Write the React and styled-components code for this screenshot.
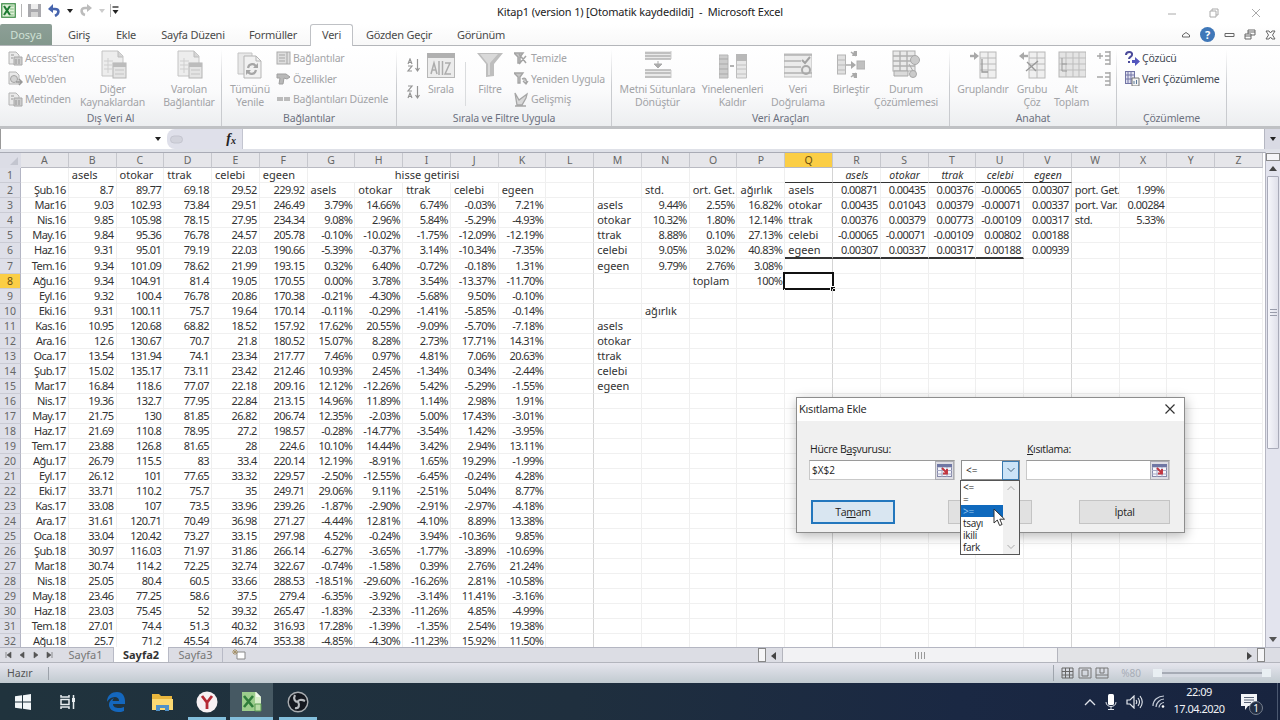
import { Fragment } from "react";
import styled, { createGlobalStyle, css } from "styled-components";

const COLUMNS = "ABCDEFGHIJKLMNOPQRSTUVWXYZ".split("");

// columns A..K, starting at row 2
const PRICES = `
Şub.16|8.7|89.77|69.18|29.52|229.92|asels|otokar|ttrak|celebi|egeen
Mar.16|9.03|102.93|73.84|29.51|246.49|3.79%|14.66%|6.74%|-0.03%|7.21%
Nis.16|9.85|105.98|78.15|27.95|234.34|9.08%|2.96%|5.84%|-5.29%|-4.93%
May.16|9.84|95.36|76.78|24.57|205.78|-0.10%|-10.02%|-1.75%|-12.09%|-12.19%
Haz.16|9.31|95.01|79.19|22.03|190.66|-5.39%|-0.37%|3.14%|-10.34%|-7.35%
Tem.16|9.34|101.09|78.62|21.99|193.15|0.32%|6.40%|-0.72%|-0.18%|1.31%
Ağu.16|9.34|104.91|81.4|19.05|170.55|0.00%|3.78%|3.54%|-13.37%|-11.70%
Eyl.16|9.32|100.4|76.78|20.86|170.38|-0.21%|-4.30%|-5.68%|9.50%|-0.10%
Eki.16|9.31|100.11|75.7|19.64|170.14|-0.11%|-0.29%|-1.41%|-5.85%|-0.14%
Kas.16|10.95|120.68|68.82|18.52|157.92|17.62%|20.55%|-9.09%|-5.70%|-7.18%
Ara.16|12.6|130.67|70.7|21.8|180.52|15.07%|8.28%|2.73%|17.71%|14.31%
Oca.17|13.54|131.94|74.1|23.34|217.77|7.46%|0.97%|4.81%|7.06%|20.63%
Şub.17|15.02|135.17|73.11|23.42|212.46|10.93%|2.45%|-1.34%|0.34%|-2.44%
Mar.17|16.84|118.6|77.07|22.18|209.16|12.12%|-12.26%|5.42%|-5.29%|-1.55%
Nis.17|19.36|132.7|77.95|22.84|213.15|14.96%|11.89%|1.14%|2.98%|1.91%
May.17|21.75|130|81.85|26.82|206.74|12.35%|-2.03%|5.00%|17.43%|-3.01%
Haz.17|21.69|110.8|78.95|27.2|198.57|-0.28%|-14.77%|-3.54%|1.42%|-3.95%
Tem.17|23.88|126.8|81.65|28|224.6|10.10%|14.44%|3.42%|2.94%|13.11%
Ağu.17|26.79|115.5|83|33.4|220.14|12.19%|-8.91%|1.65%|19.29%|-1.99%
Eyl.17|26.12|101|77.65|33.32|229.57|-2.50%|-12.55%|-6.45%|-0.24%|4.28%
Eki.17|33.71|110.2|75.7|35|249.71|29.06%|9.11%|-2.51%|5.04%|8.77%
Kas.17|33.08|107|73.5|33.96|239.26|-1.87%|-2.90%|-2.91%|-2.97%|-4.18%
Ara.17|31.61|120.71|70.49|36.98|271.27|-4.44%|12.81%|-4.10%|8.89%|13.38%
Oca.18|33.04|120.42|73.27|33.15|297.98|4.52%|-0.24%|3.94%|-10.36%|9.85%
Şub.18|30.97|116.03|71.97|31.86|266.14|-6.27%|-3.65%|-1.77%|-3.89%|-10.69%
Mar.18|30.74|114.2|72.25|32.74|322.67|-0.74%|-1.58%|0.39%|2.76%|21.24%
Nis.18|25.05|80.4|60.5|33.66|288.53|-18.51%|-29.60%|-16.26%|2.81%|-10.58%
May.18|23.46|77.25|58.6|37.5|279.4|-6.35%|-3.92%|-3.14%|11.41%|-3.16%
Haz.18|23.03|75.45|52|39.32|265.47|-1.83%|-2.33%|-11.26%|4.85%|-4.99%
Tem.18|27.01|74.4|51.3|40.32|316.93|17.28%|-1.39%|-1.35%|2.54%|19.38%
Ağu.18|25.7|71.2|45.54|46.74|353.38|-4.85%|-4.30%|-11.23%|15.92%|11.50%
`.trim().split("\n").map((line) => line.split("|"));

// columns M..X, keyed by row
const STATS = {
  1: "|||||asels|otokar|ttrak|celebi|egeen||",
  2: "|std.|ort. Get.|ağırlık|asels|0.00871|0.00435|0.00376|-0.00065|0.00307|port. Get.|1.99%",
  3: "asels|9.44%|2.55%|16.82%|otokar|0.00435|0.01043|0.00379|-0.00071|0.00337|port. Var.|0.00284",
  4: "otokar|10.32%|1.80%|12.14%|ttrak|0.00376|0.00379|0.00773|-0.00109|0.00317|std.|5.33%",
  5: "ttrak|8.88%|0.10%|27.13%|celebi|-0.00065|-0.00071|-0.00109|0.00802|0.00188||",
  6: "celebi|9.05%|3.02%|40.83%|egeen|0.00307|0.00337|0.00317|0.00188|0.00939||",
  7: "egeen|9.79%|2.76%|3.08%",
  8: "||toplam|100%",
  10: "|ağırlık",
  11: "asels",
  12: "otokar",
  13: "ttrak",
  14: "celebi",
  15: "egeen",
};

const HEADINGS = ["", "asels", "otokar", "ttrak", "celebi", "egeen"];

function cellValue(row, col) {
  if (col <= 10) {
    if (row === 1) return HEADINGS[col] || "";
    return PRICES[row - 2][col] || "";
  }
  if (col >= 12 && STATS[row]) return STATS[row].split("|")[col - 12] || "";
  return "";
}

/* ---------- icons ---------- */

function ExcelIcon({ size }) {
  return (
    <svg width={size} height={size} viewBox="0 0 20 20">
      <rect x="1" y="1" width="18" height="18" fill="#dff0d8" stroke="#3b8a45" strokeWidth="1.6" />
      <path d="M12 4h5M12 8h5M12 12h5M12 16h5" stroke="#7fb67e" strokeWidth="1.4" />
      <path d="M4 4l8 12M12 4L4 16" stroke="#1e7a33" strokeWidth="2.8" />
    </svg>
  );
}

// the same icon as it looks on the taskbar, paler and with a folded sheet
function ExcelTaskIcon() {
  return (
    <svg width="21" height="20" viewBox="0 0 21 20">
      <path d="M1 0h14l5 5v14H1z" fill="#d7edc9" />
      <path d="M1 0h13v19H1z" fill="#9ccd8c" />
      <path d="M3 4l9 11M12 4L3 15" stroke="#2f7d3a" strokeWidth="2.6" />
      <path d="M14 12h6v7h-6z" fill="#b8dca6" stroke="#5a9c52" />
      <path d="M15 0v5h5" fill="#f1f8ec" />
    </svg>
  );
}

const BIG = {
  sources: (
    <>
      <path d="M3 1h16l5 5v20H3z" fill="#ededed" stroke="#c4c4c4" />
      <path d="M19 1v6h5" fill="#d5d5d5" stroke="#bdbdbd" />
      <path d="M5 11h9M5 15h8M5 19h8M9 8v15" stroke="#cfcfcf" />
      <rect x="14" y="13" width="13" height="15" fill="#e4e4e4" stroke="#b4b4b4" />
      <rect x="14" y="13" width="13" height="4" fill="#bcbcbc" />
      <path d="M16 20h9M16 24h9" stroke="#c4c4c4" />
    </>
  ),
  refresh: (
    <>
      <path d="M2 3h14v21H2z" fill="#e8e8e8" stroke="#c4c4c4" />
      <path d="M8 6h12l5 5v17H8z" fill="#f1f1f1" stroke="#b5b5b5" />
      <path d="M20 6v5h5" fill="none" stroke="#b5b5b5" />
      <path d="M12 18c1-5 7-5 8-1M20 20c-1 5-7 5-8 1" fill="none" stroke="#a6a6a6" strokeWidth="2.2" />
      <path d="M22 13v5h-5zM10 25v-5h5z" fill="#a6a6a6" />
    </>
  ),
  sort: (
    <>
      <rect x="0.5" y="3.5" width="27" height="24" fill="#ececec" stroke="#b7b7b7" />
      <rect x="0" y="3" width="28" height="5" fill="#b0b0b0" />
      <path d="M4 24l3-11 3 11M5 20h4M18 13h5l-5 11h6M12 11v14M15.500 11v14" fill="none" stroke="#acacac" strokeWidth="1.5" />
    </>
  ),
  filter: (
    <>
      <path d="M1 3h26l-9 11v12l-8 1V14z" fill="#bebebe" />
      <path d="M4 4h18l-8 9v12h-2V14z" fill="#d9d9d9" />
    </>
  ),
  columns: (
    <>
      <path d="M1 1h26v8H1zM1 20h26v8H1z" fill="#e9e9e9" />
      <path d="M1 3h26M1 6h26M1 9h26M1 20h26M1 23h26M1 27h26" stroke="#b2b2b2" strokeWidth="1.3" />
      <path d="M14 11v3M14 18l-4-4h8z" stroke="#ababab" fill="#ababab" />
      <path d="M27 1v8M27 20v8" stroke="#cbcbcb" />
    </>
  ),
  duplicates: (
    <>
      <path d="M0 5h9v23H0z" fill="#cccccc" stroke="#b5b5b5" />
      <path d="M0 9h9M0 14h9M0 19h9M0 24h9" stroke="#a9a9a9" />
      <path d="M11 16h4" stroke="#aaa" strokeWidth="1.8" />
      <path d="M17.500 5h10v23h-10z" fill="#e7e7e7" stroke="#bdbdbd" />
      <path d="M17 4h11v7H17z" fill="#b8b8b8" />
      <path d="M17 15h11M17 19h11M17 24h11" stroke="#c0c0c0" />
    </>
  ),
  validate: (
    <>
      <rect x="0" y="4" width="28" height="23" fill="#ebebeb" stroke="#bcbcbc" />
      <path d="M0 5h28M0 11h17M0 17h17M0 23h28" stroke="#b2b2b2" strokeWidth="1.5" />
      <path d="M18 10l3 3 5-6" fill="none" stroke="#a2a2a2" strokeWidth="2" />
      <circle cx="22" cy="20" r="4" fill="none" stroke="#a9a9a9" strokeWidth="2" />
    </>
  ),
  merge: (
    <>
      <rect x="0.5" y="5" width="8" height="19" fill="#e0e0e0" stroke="#b4b4b4" />
      <path d="M0 10h9M0 15h9M0 20h9" stroke="#b8b8b8" />
      <path d="M9 15h6M14 2l5 4M14 27l5-4" stroke="#ababab" fill="none" strokeWidth="1.6" />
      <path d="M14 11l5 4-5 4zM17 1h3v5h-5zM17 28h3v-5h-5z" fill="#a9a9a9" />
      <rect x="20" y="11" width="8" height="8" fill="#c0c0c0" stroke="#b0b0b0" />
    </>
  ),
  whatif: (
    <>
      <rect x="1" y="1" width="22" height="20" fill="#e9e9e9" stroke="#adadad" />
      <path d="M1 6h22M1 11h22M1 16h22M8 1v20M15 1v20" stroke="#b0b0b0" strokeWidth="1.4" />
      <circle cx="23" cy="10" r="4.500" fill="#cbcbcb" stroke="#a8a8a8" />
      <circle cx="21" cy="24" r="3.500" fill="#cbcbcb" stroke="#a8a8a8" />
      <path d="M2 21h14v5H2zM17 14l4 7" stroke="#a9a9a9" fill="#dadada" />
    </>
  ),
  group: (
    <>
      <rect x="11" y="2" width="16" height="26" fill="#efefef" stroke="#b8b8b8" />
      <path d="M11 8h16M11 14h16M11 20h16M19 2v26" stroke="#b8b8b8" />
      <path d="M1 6h7" stroke="#a9a9a9" strokeWidth="2.4" />
      <path d="M5 2l5 4-5 4z" fill="#a9a9a9" />
      <path d="M13 9v13h6" fill="none" stroke="#999" strokeWidth="1.3" />
    </>
  ),
  ungroup: (
    <>
      <rect x="11" y="2" width="16" height="26" fill="#efefef" stroke="#b8b8b8" />
      <path d="M11 8h16M11 14h16M11 20h16M19 2v26" stroke="#b8b8b8" />
      <path d="M3 6h7" stroke="#a9a9a9" strokeWidth="2.4" />
      <path d="M6 2L1 6l5 4z" fill="#a9a9a9" />
      <path d="M8 21l12-10M9 12l9 9" fill="none" stroke="#999" strokeWidth="1.4" />
    </>
  ),
  subtotal: (
    <>
      <rect x="1" y="2" width="27" height="25" fill="#e4e4e4" stroke="#b5b5b5" />
      <path d="M1 8h27M1 14h27M1 20h27M8 2v25M15 2v25M21 2v25" stroke="#bdbdbd" />
      <path d="M4 8v13h5M4 14h5" fill="none" stroke="#999" />
    </>
  ),
};

function BigIcon({ kind }) {
  return (
    <svg width="28" height="30" viewBox="0 0 28 30">
      {BIG[kind]}
    </svg>
  );
}

function SmallIcon({ kind }) {
  return (
    <svg width="15" height="15" viewBox="0 0 15 15">
      {kind === "doc" && (
        <>
          <path d="M1 1h7l3 3v9H1z" fill="#e9e9e9" stroke="#b4b4b4" />
          <path d="M6 6h8v8H6z" fill="#cdcdcd" stroke="#a8a8a8" />
          <path d="M8 8v5M11 8v5M3 4h3M3 7h2" stroke="#979797" />
        </>
      )}
      {kind === "web" && (
        <>
          <path d="M1 1h7l3 3v9H1z" fill="#e9e9e9" stroke="#b4b4b4" />
          <circle cx="6" cy="8" r="3.500" fill="#d2d2d2" stroke="#a3a3a3" />
          <path d="M8 11h6M11 8l3 3-3 3" fill="none" stroke="#989898" strokeWidth="1.500" />
        </>
      )}
      {kind === "list" && (
        <>
          <rect x="1" y="1" width="13" height="12" fill="#dedede" stroke="#ababab" />
          <path d="M3 4h6M3 7h6M3 10h6M11 1v12" stroke="#a5a5a5" />
        </>
      )}
      {kind === "hand" && <path d="M1 3h9l4 3-3 2-3-1-1 6H3l1-6H1z" fill="#b9b9b9" stroke="#9f9f9f" />}
      {kind === "chain" && <path d="M1 7h13" stroke="#bbb" strokeWidth="4" strokeDasharray="6 1" />}
      {kind === "clear" && (
        <path d="M0 2h9L6 6v6H4V6zM5 3l7 9M12 5l-7 8" fill="#c5c5c5" stroke="#a4a4a4" strokeWidth="1.5" />
      )}
      {kind === "apply" && (
        <path d="M0 2h9L6 6v6H4V6zM8 8c3-2 5 0 4 4M9 10l3 3 2-3" fill="#c5c5c5" stroke="#a4a4a4" strokeWidth="1.3" />
      )}
      {kind === "advanced" && (
        <path d="M1 1l4 7 8-6-1 4-4 7H3zM1 14h11" fill="#d8d8d8" stroke="#a6a6a6" strokeWidth="1.3" />
      )}
      {kind === "az" && (
        <path d="M2 6l2-5 2 5M2.500 4.500h3M2 8h4l-4 5h4M11.500 1v11M9.500 10l2 3 2-3" fill="none" stroke="#949494" strokeWidth="1.2" />
      )}
      {kind === "za" && (
        <path d="M2 1h4L2 6h4M2 13l2-5 2 5M2.500 11.500h3M11.500 1v11M9.500 10l2 3 2-3" fill="none" stroke="#949494" strokeWidth="1.2" />
      )}
      {kind === "show" && (
        <path d="M0 5h6M3 2v6M8 1h5M8 5h5M8 9h5M8 13h5M13 0v14" fill="none" stroke="#a6a6a6" strokeWidth="1.3" />
      )}
      {kind === "hide" && (
        <path d="M0 5h6M8 1h5M8 5h5M8 9h5M8 13h5M13 0v14" fill="none" stroke="#a6a6a6" strokeWidth="1.3" />
      )}
      {kind === "solver" && (
        <>
          <path d="M1 4c0-4 7-4 6 0-.5 2-3 2-3 4M4 10v2" fill="none" stroke="#4a4a9a" strokeWidth="2" />
          <path d="M7 9h3V6l5 4.500-5 4.500v-3H7z" fill="#5356bd" />
        </>
      )}
      {kind === "analysis" && (
        <>
          <rect x="0.500" y="0.500" width="9" height="12" fill="#dfe0ef" stroke="#7275a5" />
          <path d="M0 4h10M0 8h10M3 0v13M6 0v13" stroke="#7275a5" />
          <path d="M7 7h7v8H7z" fill="#f4f4f4" stroke="#777" />
          <path d="M9 13v-3M11.500 13V9" stroke="#5d7b9a" />
        </>
      )}
    </svg>
  );
}

function PickIcon() {
  return (
    <svg width="15" height="13" viewBox="0 0 15 13">
      <rect x="0.500" y="0.500" width="14" height="12" fill="#f6f6fb" stroke="#8689aa" />
      <path d="M0 3h15M0 6.500h15M0 10h15M5 0v13M10 0v13" stroke="#a6a9c4" />
      <path d="M0 0h15v3H0z" fill="#6f77a4" />
      <path d="M5 4l5 5M10 5v4.500H6" stroke="#c2353f" strokeWidth="1.900" fill="none" />
    </svg>
  );
}

/* ---------- ribbon ---------- */

function Big({ kind, width, lines }) {
  return (
    <BigButton $width={width}>
      <BigIcon kind={kind} />
      <BigLabel>
        {lines.map((line) => (
          <span key={line}>{line}</span>
        ))}
      </BigLabel>
    </BigButton>
  );
}

function SmallList({ items, width, active }) {
  return (
    <SmallColumn $width={width} $active={active}>
      {items.map(([kind, text]) => (
        <SmallButton key={text}>
          <SmallIcon kind={kind} />
          {text}
        </SmallButton>
      ))}
    </SmallColumn>
  );
}

function Ribbon() {
  return (
    <RibbonBar>
      <Group $width={222}>
        <GroupBody>
          <SmallList width={69} items={[["doc", "Access'ten"], ["web", "Web'den"], ["doc", "Metinden"]]} />
          <Big kind="sources" width={77} lines={["Diğer", "Kaynaklardan"]} />
          <InnerLine />
          <Big kind="sources" width={64} lines={["Varolan", "Bağlantılar"]} />
        </GroupBody>
        <GroupName>Dış Veri Al</GroupName>
      </Group>
      <Group $width={175}>
        <GroupBody>
          <Big kind="refresh" width={46} lines={["Tümünü", "Yenile"]} />
          <SmallList width={120} items={[["list", "Bağlantılar"], ["hand", "Özellikler"], ["chain", "Bağlantıları Düzenle"]]} />
        </GroupBody>
        <GroupName>Bağlantılar</GroupName>
      </Group>
      <Group $width={215}>
        <GroupBody>
          <SortColumn>
            <SmallIcon kind="az" />
            <SmallIcon kind="za" />
          </SortColumn>
          <Big kind="sort" width={42} lines={["Sırala"]} />
          <InnerLine />
          <Big kind="filter" width={42} lines={["Filtre"]} />
          <SmallList width={95} items={[["clear", "Temizle"], ["apply", "Yeniden Uygula"], ["advanced", "Gelişmiş"]]} />
        </GroupBody>
        <GroupName>Sırala ve Filtre Uygula</GroupName>
      </Group>
      <Group $width={338}>
        <GroupBody>
          <Big kind="columns" width={81} lines={["Metni Sütunlara", "Dönüştür"]} />
          <Big kind="duplicates" width={69} lines={["Yinelenenleri", "Kaldır"]} />
          <Big kind="validate" width={62} lines={["Veri", "Doğrulama"]} />
          <Big kind="merge" width={44} lines={["Birleştir"]} />
          <Big kind="whatif" width={66} lines={["Durum", "Çözümlemesi"]} />
        </GroupBody>
        <GroupName>Veri Araçları</GroupName>
      </Group>
      <Group $width={167}>
        <GroupBody>
          <Big kind="group" width={56} lines={["Gruplandır"]} />
          <Big kind="ungroup" width={42} lines={["Grubu", "Çöz"]} />
          <Big kind="subtotal" width={37} lines={["Alt", "Toplam"]} />
          <DetailColumn>
            <SmallIcon kind="show" />
            <SmallIcon kind="hide" />
          </DetailColumn>
        </GroupBody>
        <GroupName>Anahat</GroupName>
      </Group>
      <Group $width={110}>
        <GroupBody>
          <SmallList active width={104} items={[["solver", "Çözücü"], ["analysis", "Veri Çözümleme"]]} />
        </GroupBody>
        <GroupName>Çözümleme</GroupName>
      </Group>
    </RibbonBar>
  );
}

/* ---------- sheet ---------- */

function Sheet() {
  const rows = Array.from({ length: 32 }, (_, i) => i + 1);
  return (
    <Grid>
      <Corner>
        <svg width="8" height="8" viewBox="0 0 8 8"><path d="M8 0v8H0z" fill="#c3c5cf" /></svg>
      </Corner>
      {COLUMNS.map((name) => (
        <Head key={name} $on={name === "Q"}>{name}</Head>
      ))}
      {rows.map((row) => (
        <Fragment key={row}>
          <RowHead $on={row === 8}>{row}</RowHead>
          {COLUMNS.map((name, col) => {
            if (row === 1 && col > 6 && col < 11) return null;
            if (row === 1 && col === 6) return <Cell key={name} $span={5} $align="center">hisse getirisi</Cell>;
            const value = cellValue(row, col);
            const number = /^-?\d/.test(value);
            const matrixHead = row === 1 && col > 16;
            const selected = row === 8 && name === "Q";
            return (
              <Cell
                key={name}
                $spacing={number || col === 0 ? -0.55 : name === "W" ? -0.35 : 0}
                $align={matrixHead ? "center" : number || col === 0 ? "right" : "left"}
                $italic={matrixHead}
                $selected={selected}
                $page={col === 11 || col === 16 || col === 21}
                $thin={row === 1 && col >= 16 && col <= 21}
                $thick={row === 6 && col >= 16 && col <= 20}
              >
                {value}
                {selected && <Selection />}
              </Cell>
            );
          })}
        </Fragment>
      ))}
    </Grid>
  );
}

/* ---------- dialog ---------- */

function ConstraintDialog() {
  const options = ["<=", "=", ">=", "tsayı", "ikili", "fark"];
  return (
    <Dialog>
      <DialogTitle>
        Kısıtlama Ekle
        <svg width="10" height="10" viewBox="0 0 10 10">
          <path d="M0.500 0.500l9 9M9.500 0.500l-9 9" stroke="#333" strokeWidth="1.200" />
        </svg>
      </DialogTitle>
      <DialogBody>
        <Fields>
          <FieldLabel>Hücre B<u>a</u>şvurusu:</FieldLabel>
          <span />
          <FieldLabel><u>K</u>ısıtlama:</FieldLabel>
          <RefInput>
            <span>$X$2</span>
            <PickButton><PickIcon /></PickButton>
          </RefInput>
          <Combo>
            <span>&lt;=</span>
            <ComboArrow>
              <svg width="8" height="6" viewBox="0 0 8 6"><path d="M0.500 1L4 4.500 7.500 1" fill="none" stroke="#47647d" /></svg>
            </ComboArrow>
            <Menu>
              <MenuItems>
                {options.map((option, i) => (
                  <MenuItem key={option} $on={i === 2}>{option}</MenuItem>
                ))}
              </MenuItems>
              <MenuScroll>
                <svg width="8" height="6" viewBox="0 0 8 6"><path d="M0.500 5L4 1.500 7.500 5" fill="none" stroke="#aaa" /></svg>
                <svg width="8" height="6" viewBox="0 0 8 6"><path d="M0.500 1L4 4.500 7.500 1" fill="none" stroke="#aaa" /></svg>
              </MenuScroll>
            </Menu>
            <Pointer width="13" height="19" viewBox="0 0 13 19">
              <path d="M1 1v14l3.300-3 2.300 5.500 2.500-1-2.300-5.300H11.500z" fill="#fff" stroke="#333" />
            </Pointer>
          </Combo>
          <RefInput>
            <span />
            <PickButton><PickIcon /></PickButton>
          </RefInput>
        </Fields>
        <Buttons>
          <DialogButton $width={84} $primary>Ta<u>m</u>am</DialogButton>
          <DialogButton $width={84} />
          <DialogButton $width={91}>İptal</DialogButton>
        </Buttons>
      </DialogBody>
    </Dialog>
  );
}

/* ---------- app ---------- */

function App() {
  return (
    <Screen>
      <GlobalStyle />
      <TitleBar>
        <QuickAccess>
          <ExcelIcon size={15} />
          <Bar />
          <svg width="13" height="13" viewBox="0 0 13 13">
            <path d="M0 0h13v13H0z" fill="#a9a9ad" />
            <path d="M3 0h7v5H3z" fill="#eee" />
            <path d="M3 8h7v5H3z" fill="#d4d4d4" />
          </svg>
          <svg width="12" height="13" viewBox="0 0 12 13">
            <path d="M2 5h5c5 0 4 5 0 7" fill="none" stroke="#4664ad" strokeWidth="2.600" />
            <path d="M5 0v9L0 5z" fill="#4664ad" />
          </svg>
          <Caret />
          <svg width="12" height="13" viewBox="0 0 12 13">
            <path d="M10 4H5C0 4 1 10 5 11" fill="none" stroke="#bcbcbc" strokeWidth="2.600" />
            <path d="M7 0v8l5-4z" fill="#bcbcbc" />
          </svg>
          <Caret $faint />
          <Bar />
          <Customize width="7" height="9" viewBox="0 0 7 9">
            <path d="M0.500 1h6" stroke="#333" strokeWidth="1.400" />
            <path d="M0.500 4h6L3.500 8z" fill="#222" />
          </Customize>
        </QuickAccess>
        <AppTitle>Kitap1 (version 1) [Otomatik kaydedildi]&nbsp; -&nbsp; Microsoft Excel</AppTitle>
        <WindowButtons>
          <svg width="10" height="10" viewBox="0 0 10 10"><path d="M1 6h8" stroke="#aaa" /></svg>
          <svg width="10" height="10" viewBox="0 0 10 10"><path d="M1 3h6v6H1zM3 3V1h6v6H7" fill="none" stroke="#aaa" /></svg>
          <svg width="10" height="10" viewBox="0 0 10 10"><path d="M1 1l8 8M9 1L1 9" stroke="#aaa" /></svg>
        </WindowButtons>
      </TitleBar>
      <Tabs>
        <FileTab>Dosya</FileTab>
        <Tab $width={54}>Giriş</Tab>
        <Tab $width={40}>Ekle</Tab>
        <Tab $width={94}>Sayfa Düzeni</Tab>
        <Tab $width={66}>Formüller</Tab>
        <Gap />
        <Tab $width={43} $active>Veri</Tab>
        <Tab $width={92}>Gözden Geçir</Tab>
        <Tab $width={72}>Görünüm</Tab>
        <TabTools>
          <svg width="10" height="8" viewBox="0 0 10 8"><path d="M1.500 6V4L5 1.500 8.500 4v2z" fill="none" stroke="#666" /></svg>
          <Help>?</Help>
          <svg width="11" height="8" viewBox="0 0 11 8"><path d="M1 2.500h9v3H1z" fill="none" stroke="#666" /></svg>
          <svg width="12" height="11" viewBox="0 0 12 11"><path d="M1 5h6v5H1zM4 5V1h7v5H7M1 7h6M4 3h7" fill="none" stroke="#666" /></svg>
          <svg width="11" height="10" viewBox="0 0 11 10"><path d="M1 1h3l1.500 2L7 1h3L7.500 5 10 9H7L5.500 7 4 9H1l2.500-4z" fill="none" stroke="#666" /></svg>
        </TabTools>
      </Tabs>
      <Ribbon />
      <FormulaBar>
        <NameBox><Caret /></NameBox>
        <FxBox>
          <svg width="13" height="9" viewBox="0 0 13 9">
            <path d="M4 1h5a3.500 3.500 0 0 1 0 7H4a3.500 3.500 0 0 1 0-7z" fill="#d2d3dc" stroke="#c4c5cf" />
          </svg>
          <div>f<sub>x</sub></div>
        </FxBox>
        <FormulaInput />
        <Expand><Caret /></Expand>
      </FormulaBar>
      <Workspace>
        <Sheet />
        <VScroll>
          <SplitBox />
          <Arrow $dir="up" />
          <VThumb><i /><i /><i /></VThumb>
          <VTrack />
          <Arrow $dir="down" />
        </VScroll>
      </Workspace>
      <SheetStrip>
        <SheetNav>
          <svg width="48" height="8" viewBox="0 0 48 8">
            <path d="M1 1v6M6 1v6L2 4zM19 1v6l-4-3zM29 1v6l4-3zM42 1v6l4-3zM47 1v6" fill="#555" stroke="#555" strokeWidth="0.600" />
          </svg>
        </SheetNav>
        <SheetTab $width={56}>Sayfa1</SheetTab>
        <SheetTab $width={55} $active>Sayfa2</SheetTab>
        <SheetTab $width={54}>Sayfa3</SheetTab>
        <NewSheet>
          <svg width="14" height="11" viewBox="0 0 14 11">
            <path d="M5 3h8v7H5z" fill="#fff" stroke="#888" />
            <path d="M3 0v6M0 3h6M1 1l4 4M5 1L1 5" stroke="#a5926a" />
          </svg>
        </NewSheet>
        <HSplit />
        <Arrow $dir="left" />
        <HThumb><i /><i /><i /><i /></HThumb>
        <HTrack />
        <Arrow $dir="right" />
        <HSplit $end />
      </SheetStrip>
      <StatusBar>
        <Ready>Hazır</Ready>
        <StatusTools>
          <svg width="48" height="12" viewBox="0 0 48 12">
            <path d="M1 1h11v10H1zM1 4.500h11M1 8h11M4.500 1v10M8.500 1v10" fill="none" stroke="#666" />
            <path d="M18 1h12v10H18zM21 3h6v6h-6z" fill="none" stroke="#777" />
            <path d="M35 1h12v10H35zM39 1v5h4V1M35 8h12" fill="none" stroke="#777" />
          </svg>
          <Zoom>%80</Zoom>
          <Slider />
        </StatusTools>
      </StatusBar>
      <Taskbar>
        <TaskItem $width={45}>
          <svg width="16" height="16" viewBox="0 0 16 16">
            <path d="M0 2.300l7-1v6.200H0zM8 1.200L16 0v7.500H8zM0 8.500h7v6.200l-7-1zM8 8.500h8V16l-8-1.200z" fill="#f2f6f8" />
          </svg>
        </TaskItem>
        <TaskItem $width={46}>
          <svg width="17" height="16" viewBox="0 0 17 16">
            <path d="M1 1v2h8V1M1 5.500h8v5H1zM1 15v-2h8v2M13.500 1v14" fill="none" stroke="#e8edf0" strokeWidth="1.500" />
            <path d="M12 4h3v4h-3z" fill="#e8edf0" />
          </svg>
        </TaskItem>
        <TaskItem $width={50}>
          <svg width="20" height="20" viewBox="0 0 20 20">
            <path d="M1 10C1 3 6 0 11 0c6 0 8 5 8 9v3H7c0 3 3 4 6 4 2 0 4-.5 5-1v4c-2 1-4 1-6 1-6 0-9-4-9-7 0-4 3-6 5-7-1 1-1.500 2-1.500 3H13c0-3-2-4-4-4-4 0-7 3-8 5z" fill="#1467bd" />
          </svg>
        </TaskItem>
        <TaskItem $width={43}>
          <svg width="21" height="18" viewBox="0 0 21 18">
            <path d="M0 1h7l2 2h11v14H0z" fill="#e9b63d" />
            <path d="M0 6h21v11H0z" fill="#fbd973" />
            <path d="M4 18v-6h13v6h-4v-3H8v3z" fill="#4f91c9" />
          </svg>
        </TaskItem>
        <TaskItem $width={46} $open>
          <svg width="22" height="22" viewBox="0 0 22 22">
            <circle cx="11" cy="11" r="10.500" fill="#f7f1f3" />
            <path d="M6 5l5 6.500L16 5M11 11v7" fill="none" stroke="#b52b35" strokeWidth="2.800" />
          </svg>
        </TaskItem>
        <TaskItem $width={43} $open $focus><ExcelTaskIcon /></TaskItem>
        <TaskItem $width={49} $open>
          <svg width="22" height="22" viewBox="0 0 22 22">
            <circle cx="11" cy="11" r="9.800" fill="#14181f" stroke="#a9adb1" strokeWidth="1.400" />
            <path d="M8 4c-2 4 0 7 3 7M18 10c-4-2-7-1-7 1M8 17c4 1 5-3 3-6" fill="none" stroke="#b7bbbf" strokeWidth="2.200" />
          </svg>
        </TaskItem>
        <Tray>
          <svg width="12" height="8" viewBox="0 0 12 8"><path d="M1 7l5-5 5 5" fill="none" stroke="#dfe3ea" strokeWidth="1.300" /></svg>
          <svg width="12" height="16" viewBox="0 0 12 16">
            <rect x="3" y="0" width="6" height="11" rx="1.500" fill="#fff" />
            <path d="M1 8c0 6 10 6 10 0M6 12v4M3 15.500h6" fill="none" stroke="#dfe3ea" />
          </svg>
          <svg width="17" height="14" viewBox="0 0 17 14">
            <path d="M1 5h3l4-4v12L4 9H1z" fill="none" stroke="#e4e8ee" strokeWidth="1.200" />
            <path d="M10 5q1.500 2 0 4M12 3q3 4 0 8M14 1q4.500 6 0 12" fill="none" stroke="#e4e8ee" strokeWidth="1.100" />
          </svg>
          <svg width="13" height="13" viewBox="0 0 13 13">
            <path d="M1 11C1 5 6 1 12 1M4 12c0-4 4-8 8-8M7 12.500c0-3 3-5 5-5" fill="none" stroke="#c5ccd8" strokeWidth="1.200" />
            <circle cx="11" cy="11.500" r="1.300" fill="#fff" />
          </svg>
        </Tray>
        <Clock>
          <span>22:09</span>
          <span>17.04.2020</span>
        </Clock>
        <Notice>
          <svg width="17" height="17" viewBox="0 0 17 17">
            <path d="M0 0h16v12H7l-3 4v-4H0z" fill="#f3f5f8" />
            <path d="M3 3.500h10M3 6h10M3 8.500h7" stroke="#5a6478" />
          </svg>
          <Badge>1</Badge>
        </Notice>
      </Taskbar>
      <ConstraintDialog />
    </Screen>
  );
}

export default App;

const GlobalStyle = createGlobalStyle`
  * { box-sizing: border-box; }
  body { margin: 0; overflow: hidden; }
  svg { display: block; flex: none; }
`;

const Screen = styled.div`
  position: relative;
  width: 1280px;
  height: 720px;
  display: flex;
  flex-direction: column;
  background: #fff;
  color: #333;
  font-family: "Noto Sans", "Open Sans", sans-serif;
  font-size: 11px;
  overflow: hidden;
`;

const TitleBar = styled.div`
  height: 24px;
  flex: none;
  display: grid;
  grid-template-columns: 490px 300px 1fr;
  align-items: start;
`;

const QuickAccess = styled.div`
  height: 21px;
  display: flex;
  align-items: center;
  gap: 7px;
  padding-left: 1px;
`;

const Bar = styled.span`
  width: 1px;
  height: 13px;
  margin: 0 -1px 0 -2px;
  background: #b5b5b5;
`;

const Caret = styled.span`
  border: 3px solid transparent;
  border-top: 4px solid ${props => (props.$faint ? "#ccc" : "#222")};
  border-bottom: 0;
`;

const Customize = styled.svg`
  margin-left: -5px;
`;

const AppTitle = styled.div`
  padding-top: 4px;
  line-height: 16px;
  text-align: center;
  color: #222;
  white-space: nowrap;
  letter-spacing: -0.17px;
`;

const WindowButtons = styled.div`
  display: flex;
  justify-content: flex-end;
  gap: 32px;
  padding: 8px 19px 0 0;
`;

const Tabs = styled.div`
  height: 22px;
  flex: none;
  display: flex;
  background: linear-gradient(#fff, #f8f8f8);
  border-bottom: 1px solid #b4b6ba;
`;

const FileTab = styled.div`
  width: 52px;
  height: 21px;
  line-height: 21px;
  text-align: center;
  background: linear-gradient(#8d9f96, #83988d);
  border-radius: 2px 2px 0 0;
  color: #cfe0d5;
`;

const Gap = styled.div`
  width: 4px;
`;

const Tab = styled.div`
  width: ${props => props.$width}px;
  height: 22px;
  line-height: 21px;
  text-align: center;
  white-space: nowrap;
  letter-spacing: -0.25px;
  color: #4a4a4a;
  ${props => props.$active && css`
    line-height: 19px;
    background: #fff;
    border: 1px solid #bfc1c5;
    border-bottom: 0;
    border-radius: 3px 3px 0 0;
  `}
`;

const TabTools = styled.div`
  margin-left: auto;
  display: flex;
  align-items: center;
  gap: 9px;
  padding-right: 4px;
`;

const Help = styled.div`
  width: 15px;
  height: 15px;
  border-radius: 50%;
  background: #3f77b8;
  color: #fff;
  font-weight: 700;
  line-height: 15px;
  text-align: center;
`;

const RibbonBar = styled.div`
  height: 80px;
  flex: none;
  display: flex;
  background: linear-gradient(#fff 0%, #fbfbfc 55%, #eceef0 100%);
`;

const Group = styled.div`
  width: ${props => props.$width}px;
  display: flex;
  flex-direction: column;
  border-right: 1px solid;
  border-image: linear-gradient(#fff 5%, #c9cbcf 50%, #c9cbcf) 1;
`;

const GroupBody = styled.div`
  height: 64px;
  display: flex;
  padding-left: 5px;
`;

const GroupName = styled.div`
  line-height: 16px;
  text-align: center;
  font-size: 10.5px;
  letter-spacing: -0.15px;
  color: #6d7180;
`;

const InnerLine = styled.div`
  width: 1px;
  margin: 16px 3px 4px;
  background: #dadcde;
`;

const BigButton = styled.div`
  width: ${props => props.$width}px;
  flex: none;
  display: flex;
  flex-direction: column;
  align-items: center;
  padding-top: 4px;
`;

const BigLabel = styled.div`
  display: flex;
  flex-direction: column;
  align-items: center;
  padding-top: 3px;
  white-space: nowrap;
  font-size: 10.5px;
  line-height: 12.5px;
  letter-spacing: -0.2px;
  color: #a3a4a7;
`;

const SmallColumn = styled.div`
  width: ${props => props.$width}px;
  flex: none;
  padding: 2px 0 0 3px;
  color: ${props => (props.$active ? "#444a55" : "#a3a4a7")};
`;

const SmallButton = styled.div`
  height: 20.5px;
  display: flex;
  align-items: center;
  gap: 2px;
  white-space: nowrap;
  font-size: 10.5px;
  letter-spacing: -0.2px;
`;

const SortColumn = styled.div`
  width: 18px;
  display: flex;
  flex-direction: column;
  gap: 12px;
  padding: 12px 0 0 4px;
`;

const DetailColumn = styled.div`
  display: flex;
  flex-direction: column;
  gap: 6px;
  padding: 5px 0 0 7px;
`;

const FormulaBar = styled.div`
  height: 26px;
  flex: none;
  display: flex;
  border-top: 3px solid #bfc1c4;
  border-bottom: 3px solid #dfe1e8;
  background: #fff;
`;

const NameBox = styled.div`
  width: 167px;
  display: flex;
  align-items: center;
  justify-content: flex-end;
  padding-right: 6px;
  border-left: 1px solid #999;
`;

const FxBox = styled.div`
  width: 76px;
  display: flex;
  align-items: center;
  justify-content: space-between;
  padding: 0 6px 0 3px;
  border-radius: 8px 0 0 8px;
  border-right: 1px solid #c3c5d0;
  background: #dfe0ea;
  color: #222;
  font: italic 700 14px "Liberation Serif", serif;

  sub { font-size: 10px; line-height: 8px; vertical-align: -1px; }
`;

const FormulaInput = styled.div`
  flex: 1;
`;

const Expand = styled.div`
  width: 16px;
  display: flex;
  align-items: center;
  justify-content: center;
  background: #d9dae4;
  border-left: 1px solid #b5b7c2;
`;

const Workspace = styled.div`
  height: 495px;
  flex: none;
  display: flex;
  overflow: hidden;
`;

const Grid = styled.div`
  width: 1265px;
  height: 498px;
  flex: none;
  display: grid;
  grid-template-columns: 21px repeat(26, 47.77px);
  grid-template-rows: 15px repeat(5, 15px) 16px repeat(26, 15px);
  border-top: 1px solid #a9abb5;
`;

const headStyle = css`
  display: flex;
  align-items: center;
  justify-content: center;
  font-size: 10.5px;
  line-height: 14px;
  color: ${props => (props.$on ? "#6b4f10" : "#666")};
  background: ${props => (props.$on ? "#fbce45" : "#e6e6ea")};
`;

const Corner = styled.div`
  display: flex;
  align-items: flex-end;
  justify-content: flex-end;
  padding: 0 3px 3px 0;
  background: #dcdde6;
`;

const Head = styled.div`
  ${headStyle}
  border-right: 1px solid #c6c7cd;
  border-bottom: 1px solid #b9bac2;
`;

const RowHead = styled.div`
  ${headStyle}
  align-items: flex-start;
  border-right: 1px solid #b3b5c4;
  border-bottom: 1px solid #cacbd4;
  background: ${props => (props.$on ? "#fbce45" : "#dedfe8")};
`;

const Cell = styled.div`
  position: relative;
  min-width: 0;
  ${props => props.$span && `grid-column: span ${props.$span};`}
  padding: 0 2px 0 3px;
  line-height: 14px;
  white-space: nowrap;
  overflow: ${props => (props.$selected ? "visible" : "hidden")};
  text-align: ${props => props.$align};
  font-style: ${props => (props.$italic ? "italic" : "normal")};
  font-size: ${props => (props.$italic ? "10.5px" : "11px")};
  letter-spacing: ${props => props.$spacing || 0}px;
  color: #333;
  border-right: 1px solid ${props => (props.$page ? "#d4d4d4" : "#efefef")};
  border-bottom: 1px solid #f0f0f0;
  ${props => props.$thin && "border-bottom-color: #333;"}
  ${props => props.$thick && "border-bottom: 2px solid #333;"}
`;

const Selection = styled.div`
  position: absolute;
  inset: -2px -2px -2px -2px;
  border: 2px solid #111;

  &::after {
    content: "";
    position: absolute;
    right: -3px;
    bottom: -3px;
    width: 4px;
    height: 4px;
    background: #111;
    box-shadow: -1px -1px 0 #fff;
  }
`;

const VScroll = styled.div`
  width: 15px;
  display: flex;
  flex-direction: column;
  align-items: center;
  background: #e3e4ee;
  border-left: 1px solid #b5b6c2;
`;

const SplitBox = styled.div`
  width: 14px;
  height: 8px;
  margin-top: 1px;
  background: #f5f5f8;
  border: 1px solid #888;
`;

const arrowBorders = {
  up: "border-bottom: 5px solid #444; border-top: 0; margin: 5px 0;",
  down: "border-top: 5px solid #555; border-bottom: 0; margin: 5px 0;",
  left: "border-right: 5px solid #444; border-left: 0; margin: 4px 6px 0 5px;",
  right: "border-left: 5px solid #444; border-right: 0; margin: 4px 5px 0 0;",
};

const Arrow = styled.div`
  width: 0;
  height: 0;
  flex: none;
  border: 4px solid transparent;
  ${props => arrowBorders[props.$dir]}
`;

const VThumb = styled.div`
  width: 12px;
  height: 273px;
  display: flex;
  flex-direction: column;
  align-items: center;
  justify-content: center;
  gap: 2px;
  background: linear-gradient(90deg, #f6f6fb, #dfe0ea);
  border: 1px solid #a9abb9;
  border-radius: 1px;

  i { width: 7px; height: 1px; background: #999cab; }
`;

const VTrack = styled.div`
  flex: 1;
`;

const SheetStrip = styled.div`
  height: 16px;
  flex: none;
  display: flex;
  background: #dcdde4;
  border-top: 1px solid #b4b6c2;
  border-bottom: 1px solid #b3b5bd;
`;

const SheetNav = styled.div`
  width: 58px;
  padding: 3px 0 0 5px;
`;

const SheetTab = styled.div`
  width: ${props => props.$width}px;
  height: 15px;
  margin-top: -1px;
  line-height: 15px;
  text-align: center;
  font-size: 11px;
  border-right: 1px solid #b8bac6;
  color: ${props => (props.$active ? "#333" : "#777")};
  ${props => props.$active && "background: #fff; font-weight: 700;"}
`;

const NewSheet = styled.div`
  width: 535px;
  padding: 1px 0 0 9px;
`;

const HSplit = styled.div`
  width: 8px;
  margin-left: ${props => (props.$end ? "auto" : "0")};
  margin-right: ${props => (props.$end ? "15px" : "0")};
  flex: none;
  background: #f6f6f8;
  border: 1px solid #888;
`;

const HThumb = styled.div`
  width: 276px;
  display: flex;
  align-items: center;
  justify-content: center;
  gap: 2px;
  background: #f2f2f4;
  border: 1px solid #b4b5bd;
  border-width: 0 1px;

  i { width: 1px; height: 7px; background: #999; }
`;

const HTrack = styled.div`
  flex: 1;
  background: #e2e3e6;
`;

const StatusBar = styled.div`
  height: 20px;
  flex: none;
  display: flex;
  align-items: center;
  background: linear-gradient(#e5e5ed, #c1cad0);
`;

const Ready = styled.div`
  width: 49px;
  line-height: 13px;
  padding-left: 7px;
  font-size: 10.5px;
  color: #555;
  border-right: 1px solid #9ca2aa;
`;

const StatusTools = styled.div`
  width: 227px;
  height: 16px;
  margin-left: auto;
  display: flex;
  align-items: center;
  padding-left: 7px;
  border-left: 1px solid #9fa5ad;
`;

const Zoom = styled.div`
  width: 44px;
  text-align: center;
  font-size: 10px;
  color: #a8adb7;
`;

const Slider = styled.div`
  width: 118px;
  height: 8px;
  border-left: 9px solid #e9eff3;
  border-right: 9px solid #e9eff3;
  background: linear-gradient(#d5d9e1 3px, #a6abb5 3px, #a6abb5 5px, #d5d9e1 5px);
`;

const Taskbar = styled.div`
  flex: 1;
  display: flex;
  align-items: stretch;
  background: linear-gradient(90deg, #20333d, #1f2f3e 45%, #1a2843 75%, #18243f);
`;

const TaskItem = styled.div`
  width: ${props => props.$width}px;
  display: flex;
  align-items: center;
  justify-content: center;
  background: ${props => (props.$focus ? "#465963" : "transparent")};
  ${props => props.$open && css`
    background-image: linear-gradient(#83bfdc, #83bfdc);
    background-size: ${props.$focus ? "100%" : "38px"} 3px;
    background-position: center bottom;
    background-repeat: no-repeat;
  `}
`;

const Tray = styled.div`
  margin-left: auto;
  display: flex;
  align-items: center;
  gap: 9px;
`;

const Clock = styled.div`
  width: 68px;
  display: flex;
  flex-direction: column;
  align-items: center;
  color: #f0f2f5;
  font-size: 11px;
  line-height: 17px;
  letter-spacing: -0.5px;
`;

const Notice = styled.div`
  position: relative;
  width: 45px;
  padding: 11px 0 0 8px;
  border-right: 1px solid #4b5870;
  margin-right: 2px;
`;

const Badge = styled.div`
  position: absolute;
  left: 16px;
  top: 18px;
  width: 14px;
  height: 14px;
  border-radius: 50%;
  border: 1px solid #77808f;
  background: #222d42;
  color: #fff;
  font-size: 10px;
  line-height: 12px;
  text-align: center;
`;

const Dialog = styled.div`
  position: absolute;
  left: 796px;
  top: 397px;
  width: 389px;
  height: 136px;
  display: flex;
  flex-direction: column;
  background: #f0f0f0;
  border: 1px solid #8d8d8d;
  box-shadow: 1px 3px 11px rgba(0, 0, 0, 0.28);
  font-family: "Open Sans", "Noto Sans", sans-serif;
  color: #222;
`;

const DialogTitle = styled.div`
  height: 23px;
  display: flex;
  align-items: center;
  justify-content: space-between;
  padding: 0 9px 2px 2px;
  background: #fff;
  letter-spacing: -0.2px;
`;

const DialogBody = styled.div`
  padding: 20px 14px 0 12px;
`;

const Fields = styled.div`
  display: grid;
  grid-template-columns: 146px 59px 144px;
  grid-template-rows: 19px 20px;
  column-gap: 6px;
`;

const FieldLabel = styled.div`
  padding-left: 1px;
  line-height: 17px;
  font-size: 10.5px;
  letter-spacing: -0.35px;
`;

const RefInput = styled.div`
  display: flex;
  align-items: center;
  justify-content: space-between;
  padding-left: 2px;
  background: #fff;
  border: 1px solid #c9c9c9;
  border-top-color: #9a9a9a;
  font-size: 10px;
`;

const PickButton = styled.div`
  width: 19px;
  height: 19px;
  display: flex;
  align-items: center;
  justify-content: center;
  background: #dedee4;
  border: 1px solid #adadb3;
`;

const Combo = styled.div`
  position: relative;
  display: flex;
  justify-content: space-between;
  align-items: center;
  padding-left: 4px;
  background: #fff;
  border: 1px solid #8f8f8f;
  font-size: 10px;
`;

const ComboArrow = styled.div`
  width: 17px;
  height: 19px;
  display: flex;
  align-items: center;
  justify-content: center;
  background: #cce4f7;
  border: 1px solid #3b7bb0;
`;

const Menu = styled.div`
  position: absolute;
  left: -2px;
  top: 19px;
  z-index: 1;
  width: 60px;
  height: 75px;
  display: flex;
  background: #fff;
  border: 1px solid #555;
`;

const MenuItems = styled.div`
  flex: 1;
`;

const MenuItem = styled.div`
  height: 12px;
  padding-left: 2px;
  line-height: 13px;
  letter-spacing: -0.3px;
  color: ${props => (props.$on ? "#9fc9ee" : "#222")};
  background: ${props => (props.$on ? "#0f69bd" : "transparent")};
`;

const MenuScroll = styled.div`
  width: 16px;
  display: flex;
  flex-direction: column;
  align-items: center;
  justify-content: space-between;
  padding: 4px 0;
  background: #f0f0f0;
`;

const Pointer = styled.svg`
  position: absolute;
  left: 31px;
  top: 47px;
  z-index: 2;
`;

const Buttons = styled.div`
  display: flex;
  padding: 20px 0 0 2px;
`;

const DialogButton = styled.div`
  width: ${props => props.$width}px;
  height: 24px;
  line-height: ${props => (props.$primary ? 20 : 22)}px;
  text-align: center;
  font-size: 10.5px;
  letter-spacing: -0.3px;
  background: ${props => (props.$primary ? "#d9e6f1" : "#e1e1e1")};
  border: ${props => (props.$primary ? "2px solid #2377bd" : "1px solid #c4c4c4")};

  & + & { margin-left: 53px; }
  & + & + & { margin-left: 47px; }
`;
